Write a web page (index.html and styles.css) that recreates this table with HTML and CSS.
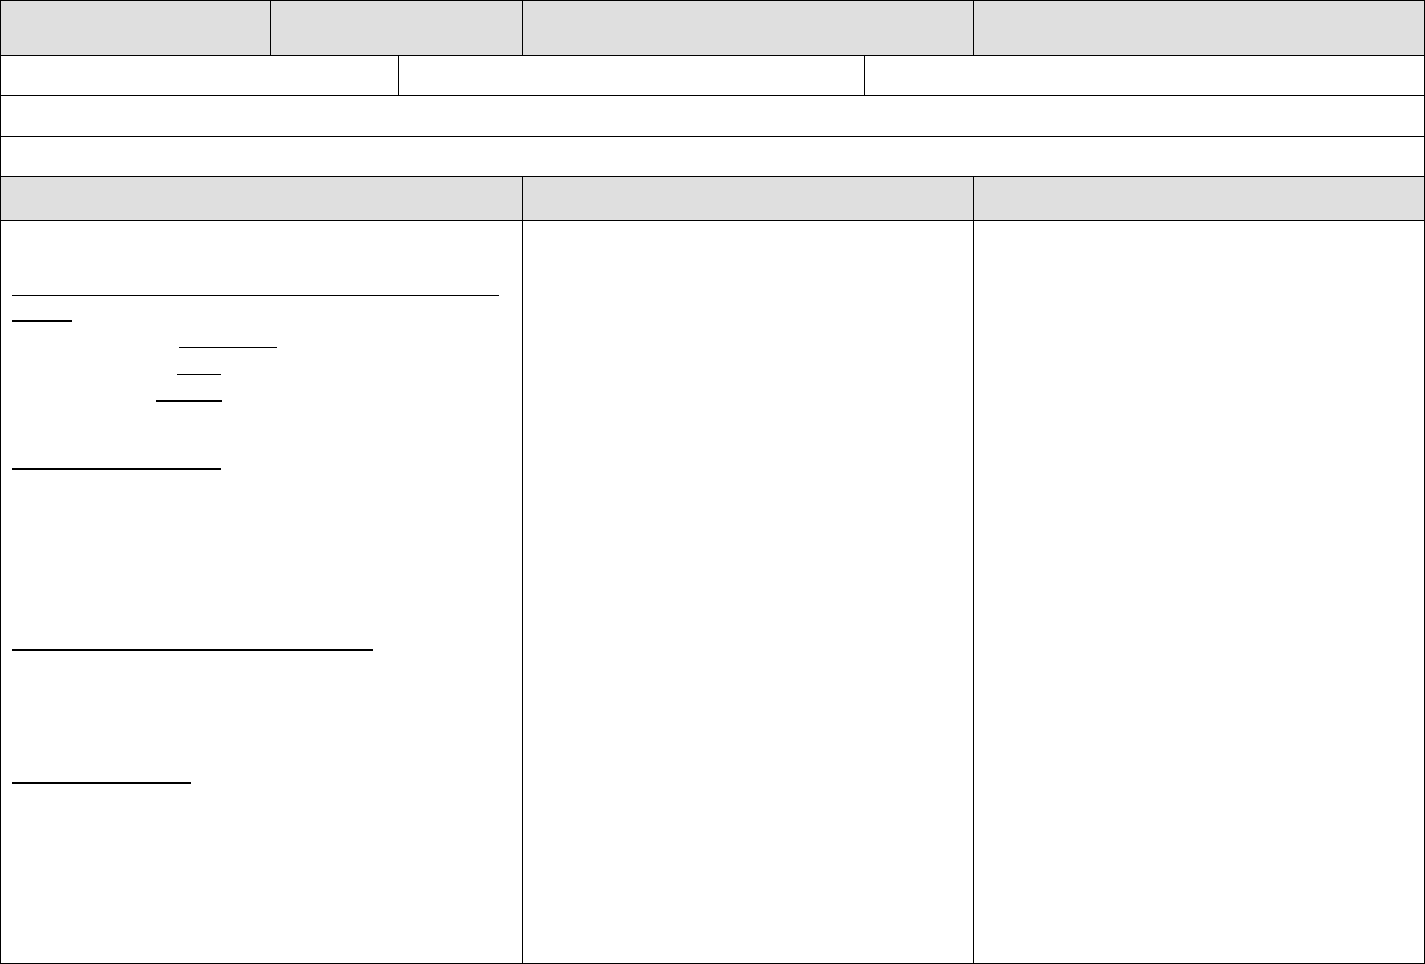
FILE: index.html
```html
<!DOCTYPE html>
<html lang="es">
<head>
    <meta charset="UTF-8">
    <meta name="viewport" content="width=device-width, initial-scale=1.0">
    <title>Formulario</title>
    <link rel="stylesheet" href="styles.css">
</head>
<body>

    <!-- Tabla del formulario -->
    <table class="sheet">
        <colgroup>
            <col class="c1">
            <col class="c2">
            <col class="c3">
            <col class="c4">
            <col class="c5">
            <col class="c6">
        </colgroup>
        <tr class="row-head">
            <td class="shade"></td>
            <td class="shade" colspan="2"></td>
            <td class="shade" colspan="2"></td>
            <td class="shade"></td>
        </tr>
        <tr class="row-info">
            <td colspan="2"></td>
            <td colspan="2"></td>
            <td colspan="2"></td>
        </tr>
        <tr class="row-wide">
            <td colspan="6"></td>
        </tr>
        <tr class="row-info">
            <td colspan="6"></td>
        </tr>
        <tr class="row-sub">
            <td class="shade" colspan="3"></td>
            <td class="shade" colspan="2"></td>
            <td class="shade"></td>
        </tr>
        <tr class="row-body">
            <td colspan="3">
                <!-- Campos en blanco subrayados -->
                <div class="blank b1"></div>
                <div class="blank thick b2"></div>
                <div class="blank b3"></div>
                <div class="blank b4"></div>
                <div class="blank thick b5"></div>
                <div class="blank thick b6"></div>
                <div class="blank thick b7"></div>
                <div class="blank thick b8"></div>
            </td>
            <td colspan="2"></td>
            <td></td>
        </tr>
    </table>

</body>
</html>
```

FILE: styles.css
```css
body {
    font-family: 'Liberation Sans', Arial, sans-serif;
    background-color: #fff;
    margin: 0;
    padding: 0;
}

/* Tabla */
.sheet {
    width: 1424px;
    border-collapse: collapse;
    table-layout: fixed;
}

.sheet td {
    border: 1px solid #000;
    padding: 0;
    vertical-align: top;
}

.c1 { width: 270px; }
.c2 { width: 128px; }
.c3 { width: 124px; }
.c4 { width: 342px; }
.c5 { width: 109px; }
.c6 { width: 451px; }

.shade {
    background-color: #dfdfdf;
}

.row-head { height: 55px; }
.row-info { height: 40px; }
.row-wide { height: 41px; }
.row-sub { height: 44px; }
.row-body { height: 743px; }

/* Lineas para rellenar */
.blank {
    border-top: 1px solid #000;
    height: 0;
}

.blank.thick {
    border-top-width: 2px;
}

.b1 { margin: 74px 0 0 11px; width: 487px; }
.b2 { margin: 24px 0 0 11px; width: 60px; }
.b3 { margin: 25px 0 0 178px; width: 98px; }
.b4 { margin: 26px 0 0 176px; width: 44px; }
.b5 { margin: 25px 0 0 155px; width: 66px; }
.b6 { margin: 66px 0 0 11px; width: 209px; }
.b7 { margin: 179px 0 0 11px; width: 361px; }
.b8 { margin: 131px 0 0 11px; width: 179px; }
```
